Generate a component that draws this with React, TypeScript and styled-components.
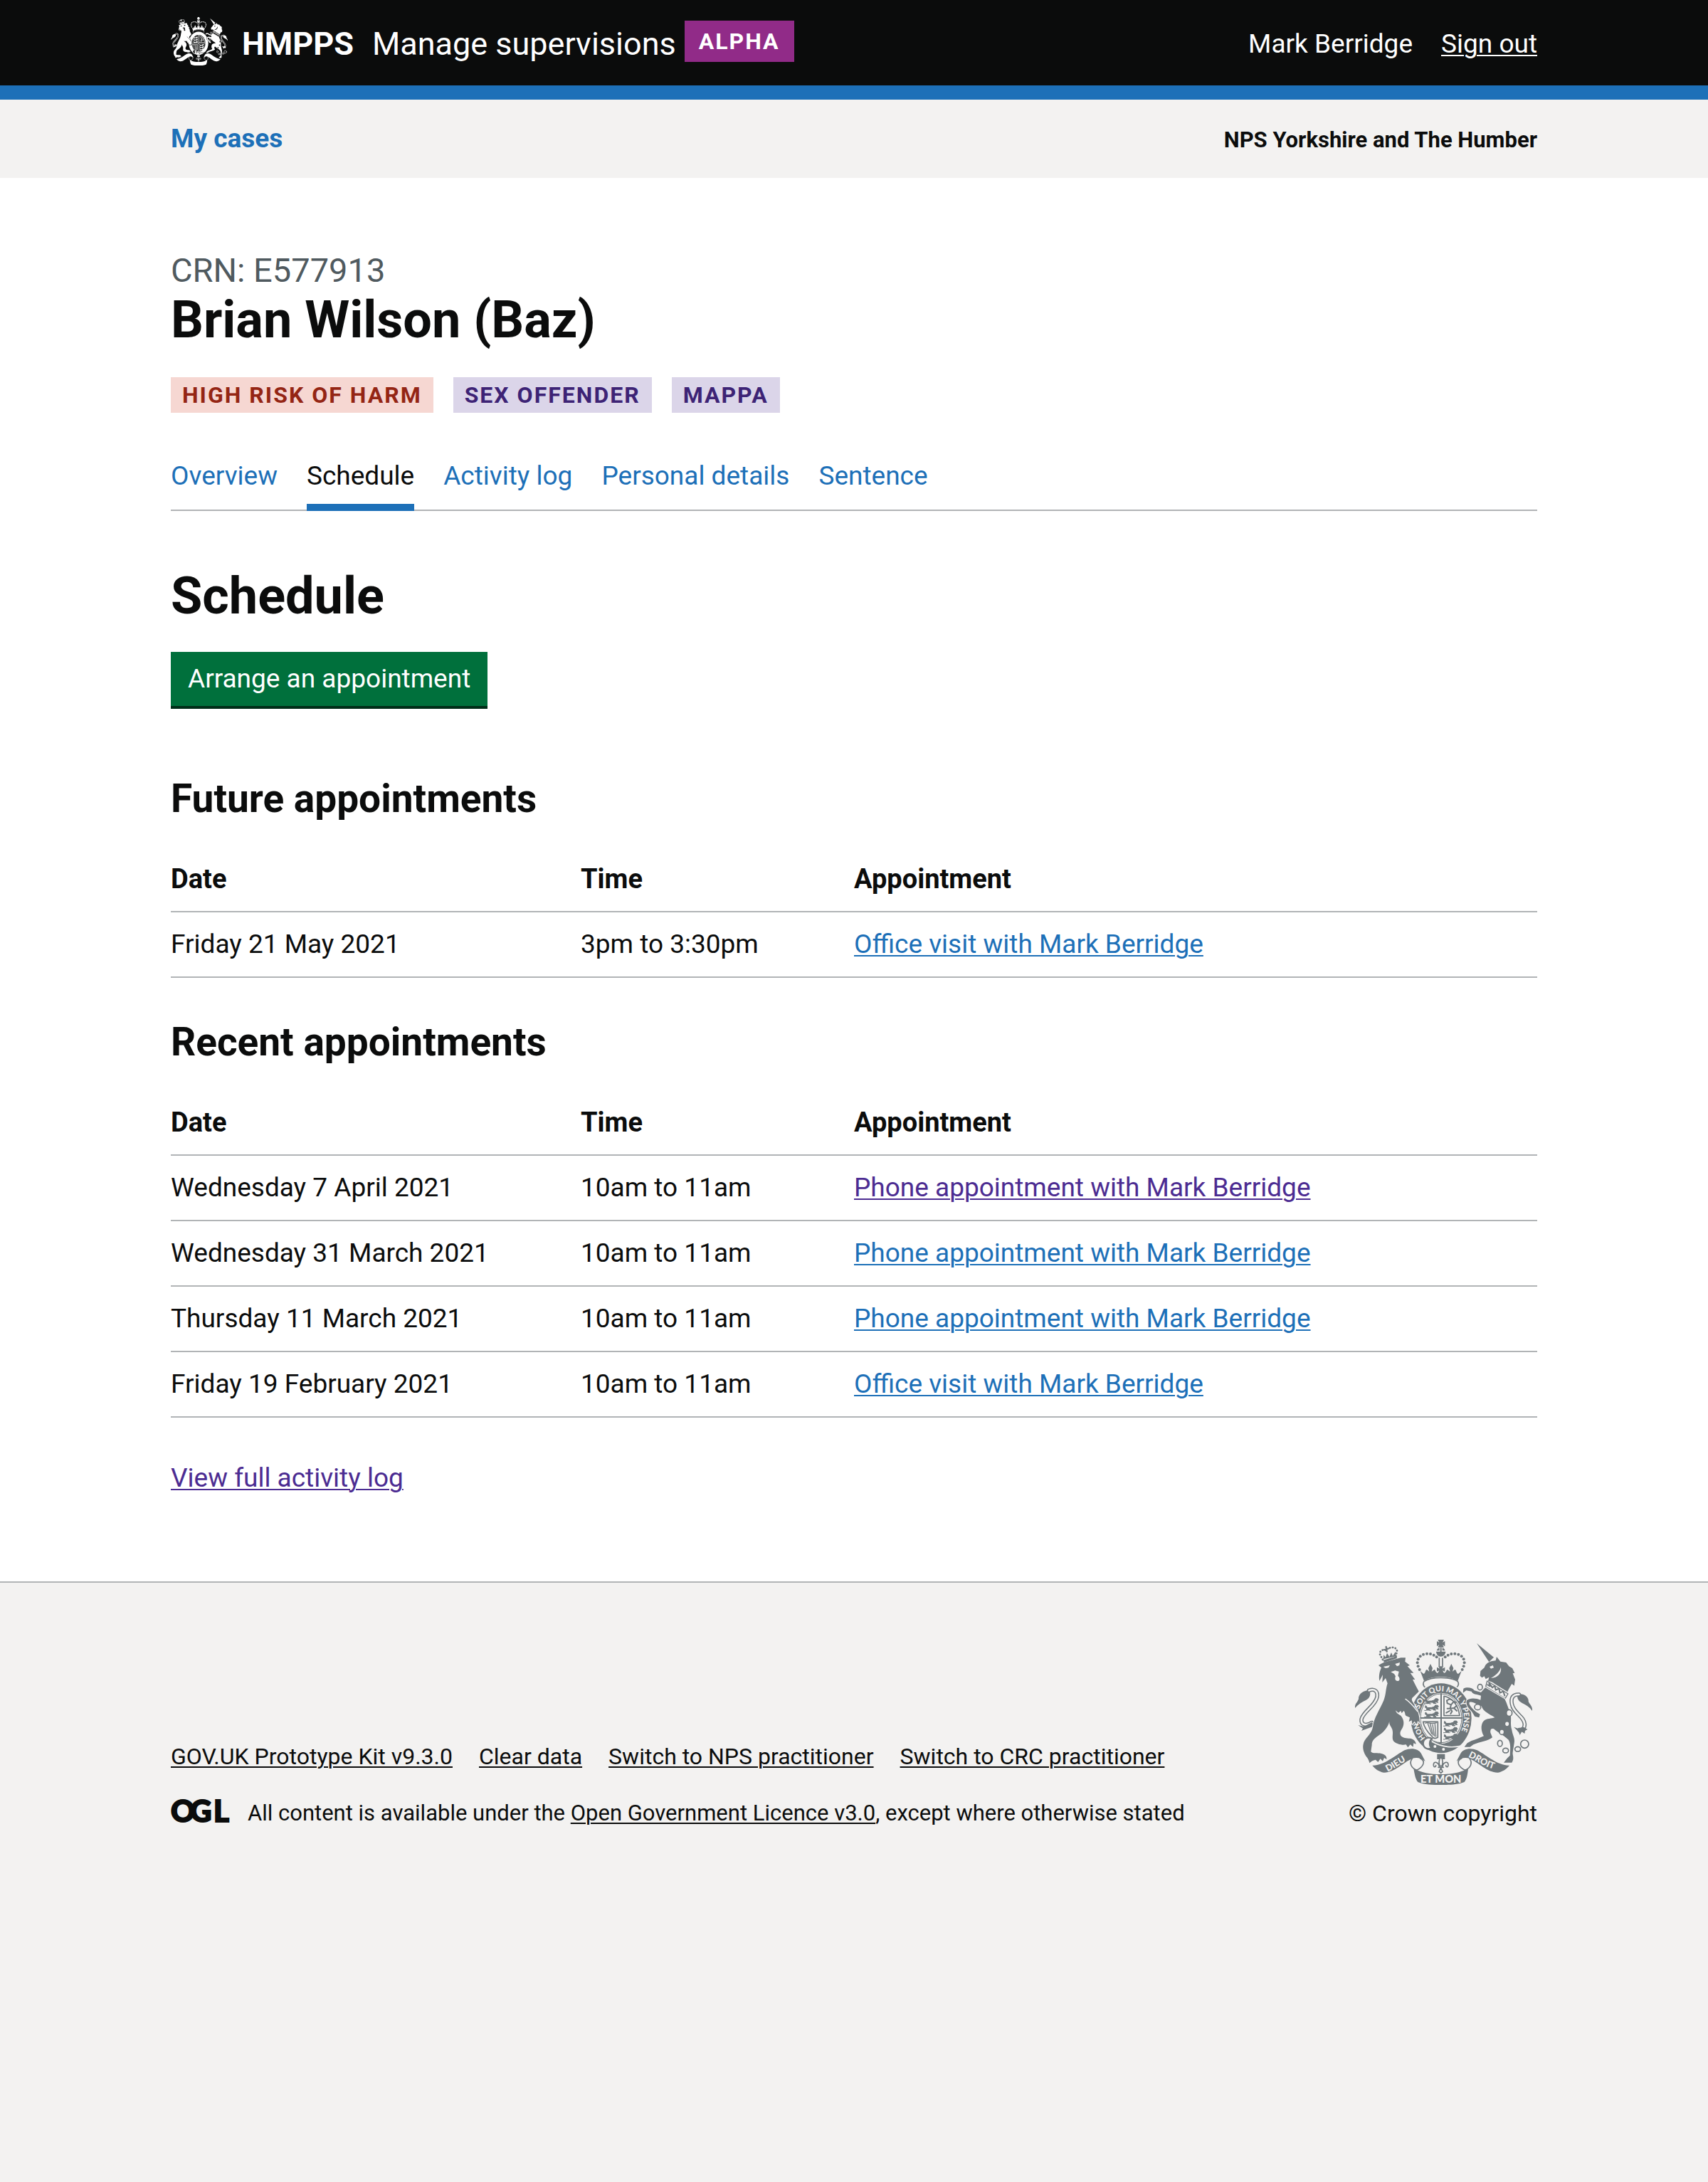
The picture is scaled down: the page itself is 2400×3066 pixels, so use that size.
import React from "react";
import styled, { createGlobalStyle } from "styled-components";

const color = {
  ink: "#0b0c0c",
  white: "#ffffff",
  blue: "#1d70b8",
  visited: "#4c2c92",
  panel: "#f3f2f1",
  border: "#b1b4b6",
  muted: "#505a5f",
  green: "#00703c",
  greenDark: "#002d18",
  crest: "#6f777b",
};

const GlobalStyle = createGlobalStyle`
  *, *::before, *::after { box-sizing: border-box; }
  body {
    margin: 0;
    background: ${color.panel};
    color: ${color.ink};
    font-family: Roboto, "Liberation Sans", sans-serif;
    font-size: 37px;
    line-height: 50px;
  }
`;

const Container = styled.div`
  max-width: 2000px;
  margin: 0 auto;
  padding: 0 40px;
`;

const Link = styled.a<{ $tone?: string }>`
  color: ${(p) => p.$tone ?? color.blue};
  text-decoration: underline;
  text-decoration-thickness: 2px;
  text-underline-offset: 3px;
`;

/* Header */

const Header = styled.header`
  background: ${color.ink};
  color: ${color.white};
  border-bottom: 20px solid ${color.blue};
`;

const HeaderBar = styled(Container)`
  display: flex;
  justify-content: space-between;
  align-items: center;
  padding-top: 24px;
  padding-bottom: 28px;
`;

const Brand = styled.div`
  display: flex;
  align-items: center;
  gap: 12px;
`;

const BrandLink = styled.a`
  display: flex;
  align-items: center;
  gap: 20px;
  color: inherit;
  text-decoration: none;
`;

const BrandName = styled.span`
  display: flex;
  gap: 26px;
  padding-top: 8px;
  font-size: 45px;
  line-height: 60px;
`;

const Phase = styled.strong`
  padding: 10px 20px;
  background: #912b88;
  font-size: 32px;
  line-height: 38px;
  letter-spacing: 2px;
`;

const UserNav = styled.nav`
  display: flex;
  gap: 40px;
  padding-top: 8px;
`;

const SubHeader = styled.div`
  background: ${color.panel};
`;

const SubHeaderBar = styled(Container)`
  display: flex;
  justify-content: space-between;
  align-items: baseline;
  padding-top: 30px;
  padding-bottom: 28px;
`;

const PrimaryLink = styled.a`
  color: ${color.blue};
  font-weight: 700;
  text-decoration: none;
`;

const Region = styled.strong`
  font-size: 31px;
`;

/* Page */

const Main = styled.main`
  background: ${color.white};
`;

const MainInner = styled(Container)`
  padding-top: 100px;
  padding-bottom: 120px;
`;

const Caption = styled.span`
  display: block;
  color: ${color.muted};
  font-size: 47px;
  line-height: 60px;
`;

const Title = styled.h1`
  margin: 0;
  font-size: 72px;
  line-height: 80px;
`;

const SectionTitle = styled.h2`
  margin: 80px 0 38px;
  font-size: 72px;
  line-height: 80px;
`;

const Tags = styled.div`
  display: flex;
  flex-wrap: wrap;
  gap: 28px;
  margin: 40px 0 64px;
`;

const Tag = styled.strong<{ $kind: "red" | "purple" }>`
  padding: 6px 16px;
  background: ${(p) => (p.$kind === "red" ? "#f6d7d2" : "#dbd5e9")};
  color: ${(p) => (p.$kind === "red" ? "#942514" : "#3d2375")};
  font-size: 32px;
  line-height: 38px;
  letter-spacing: 2px;
`;

const Tabs = styled.nav`
  display: flex;
  gap: 41px;
  box-shadow: inset 0 -2px 0 ${color.border};
`;

const Tab = styled.a<{ $active: boolean }>`
  padding-bottom: 14px;
  border-bottom: 10px solid ${(p) => (p.$active ? color.blue : "transparent")};
  color: ${(p) => (p.$active ? color.ink : color.blue)};
  text-decoration: none;
`;

const Button = styled.button`
  display: block;
  padding: 13px 24px;
  border: 0;
  background: ${color.green};
  box-shadow: 0 4px 0 ${color.greenDark};
  color: ${color.white};
  font: inherit;
`;

const Group = styled.section<{ $first?: boolean }>`
  margin-top: ${(p) => (p.$first ? 100 : 60)}px;
`;

const GroupTitle = styled.h3`
  margin: 0 0 38px;
  font-size: 55px;
  line-height: 60px;
`;

const Table = styled.table`
  width: 100%;
  border-collapse: separate;
  border-spacing: 0;
  table-layout: fixed;
`;

const Th = styled.th<{ $width: string }>`
  width: ${(p) => p.$width};
  padding: 20px 0;
  border-bottom: 2px solid ${color.border};
  font-size: 38px;
  text-align: left;
`;

const Td = styled.td`
  padding: 20px 0;
  border-bottom: 2px solid ${color.border};
`;

const LogLink = styled.p`
  margin: 60px 0 0;
`;

/* Footer */

const Footer = styled.footer`
  border-top: 2px solid ${color.border};
  font-size: 31px;
  line-height: 40px;
`;

const FooterBar = styled(Container)`
  display: flex;
  justify-content: space-between;
  align-items: flex-end;
  padding-top: 80px;
  padding-bottom: 80px;
`;

const FooterMeta = styled.div`
  display: grid;
  gap: 40px;
`;

const FooterLinks = styled.nav`
  display: flex;
  flex-wrap: wrap;
  gap: 37px;
  font-size: 32px;
`;

const Licence = styled.div`
  display: flex;
  align-items: flex-start;
  gap: 26px;
`;

const Copyright = styled.a`
  display: grid;
  justify-items: center;
  gap: 20px;
  color: inherit;
  font-size: 32px;
  text-decoration: none;
`;

const OglMark = styled.svg`
  flex: none;
  overflow: visible;
`;

/* Drawings */

type CrestProps = { width: number; height: number; fill: string; ground: string; lettering?: boolean };

const arch = [[347, 198], [341, 184], [338, 169], [341, 154], [350, 142], [363, 134], [378, 131], [393, 132], [407, 137], [419, 145]];

function Lions({ x, y }: { x: number; y: number }) {
  return (
    <g transform={`translate(${x} ${y})`}>
      {[0, 28, 56].map((dy) => (
        <path
          key={dy}
          transform={`translate(0 ${dy})`}
          d="M0 20H8L10 12L3 8L4 0L9 3L11 9L30 8L40 5L46 -2L56 -1L59 5L53 9L58 14H50L47 11L44 14L49 19H38L35 14H23L19 20H27M14 20L15 13"
          fill="currentColor"
          stroke="currentColor"
          strokeWidth="3"
        />
      ))}
    </g>
  );
}

function RibbonSide() {
  return (
    <>
      <path d="M148 602C196 604 240 562 284 538C312 526 344 532 354 552L371 584C352 570 334 566 316 573C278 590 238 634 196 632C176 628 160 617 148 602Z" fill="currentColor" />
      <path d="M316 573C302 592 312 614 336 622M350 572C376 584 362 608 336 622" fill="none" stroke="currentColor" strokeWidth="5" />
    </>
  );
}

function Crest({ width, height, fill, ground, lettering = false }: CrestProps) {
  return (
    <svg
      width={width}
      height={height}
      viewBox="72 72 750 612"
      preserveAspectRatio="none"
      color={fill}
      fill="none"
      strokeLinejoin="round"
      strokeLinecap="round"
      aria-hidden="true"
    >
      {/* crown */}
      <path d="M424 72H450L444 84L454 78V100L444 93L450 104H424L430 93L420 100V78L430 84Z" fill="currentColor" />
      <path d="M434 106H440V122H457C456 134 448 143 437 143C426 143 418 134 417 122H434Z" fill="currentColor" />
      <path d="M419 118C422 110 427 107 431 106V118ZM455 118C452 110 447 107 443 106V118Z" fill="currentColor" />
      <path d="M430 150V182M444 150V182" stroke="currentColor" strokeWidth="5" />
      {arch.map(([x, y]) => (
        <React.Fragment key={`${x}-${y}`}>
          <circle cx={x} cy={y} r="6" fill="currentColor" />
          <circle cx={874 - x} cy={y} r="6" fill="currentColor" />
        </React.Fragment>
      ))}
      <path d="M350 204L364 216C374 212 370 200 378 198L388 206L384 192L393 174L402 192L398 206L410 198C416 202 414 212 424 212L430 202L420 206V188L432 194L426 184H448L442 194L454 188V206L444 202L450 212C460 212 458 202 464 198L476 206L472 192L481 174L490 192L486 206L496 198C504 200 500 212 510 216L524 204L508 246C486 232 462 228 437 228C412 228 388 232 366 246Z" fill="currentColor" />
      <path d="M366 248C386 234 412 232 437 232C462 232 488 234 508 248C514 258 510 268 502 274H372C364 268 360 258 366 248Z" fill={ground} stroke="currentColor" strokeWidth="5" />

      {/* garter and shield */}
      <ellipse cx="438" cy="403" rx="132" ry="152" fill={ground} />
      <ellipse cx="438" cy="403" rx="128" ry="147" fill="currentColor" />
      <ellipse cx="438" cy="403" rx="91" ry="107" fill={ground} />
      <ellipse cx="438" cy="403" rx="87" ry="103" stroke="currentColor" strokeWidth="3" />
      <path d="M438 300V506M351 402H525" stroke="currentColor" strokeWidth="6" />
      <Lions x={368} y={322} />
      <Lions x={448} y={416} />
      <path d="M450 310C484 316 510 346 516 392H450Z" stroke="currentColor" strokeWidth="5" />
      <path d="M460 380L474 372M480 346L492 332L500 338M480 346L464 340L462 328L474 322L484 326M480 346L476 362L464 362M476 362L484 374L478 384M476 362L492 360L504 372M492 360L504 350" stroke="currentColor" strokeWidth="6" />
      <path d="M362 418H424V484C414 490 404 488 398 478C382 462 366 444 362 418Z" stroke="currentColor" strokeWidth="5" />
      <path d="M372 424C382 416 396 432 418 422M382 426L398 468M392 428L404 474M402 430L410 478M412 428L416 480" stroke="currentColor" strokeWidth="4" />
      <path d="M368 492L420 504C452 514 480 516 514 508L506 524C470 552 420 552 366 528Z" fill="currentColor" />
      <path d="M400 502C436 522 476 530 520 520" stroke={ground} strokeWidth="5" />
      <path d="M400 490C382 478 362 490 362 510C364 530 384 538 398 528C388 522 386 498 400 490Z" fill={ground} stroke="currentColor" strokeWidth="7" />
      <circle cx="412" cy="522" r="6" fill={ground} />
      <circle cx="448" cy="534" r="6" fill={ground} />

      {/* lion */}
      <path d="M75 360C74 340 84 340 90 322C88 300 112 286 134 284C144 300 138 318 122 326C104 334 88 344 75 360Z" fill="currentColor" />
      <path d="M134 286C160 276 172 292 168 314C160 352 108 376 102 408C100 430 120 438 146 422" stroke="currentColor" strokeWidth="17" />
      <path d="M134 286C160 276 172 292 168 314C160 352 108 376 102 408C100 430 120 438 146 422" stroke={ground} strokeWidth="8" />
      <path d="M88 432L112 438L146 420L158 436L128 446L102 456L108 446Z" fill="currentColor" />
      <path
        d="M174 180L184 174L196 168L268 148L288 148L286 164L306 180L296 184L322 212L308 212L328 240L318 240L332 268L344 290L322 312C314 318 312 324 318 334C334 360 346 380 348 424L340 414L334 430L326 416L316 428L314 412L302 418L306 400L292 394C284 390 288 378 280 372L272 382L268 372L258 380L246 370C248 380 256 386 268 392C280 406 284 424 276 442C268 456 262 464 268 476C276 486 292 488 306 488C322 490 332 500 332 512L322 508L320 524L308 514L298 526L290 514C272 518 248 510 238 500C228 486 238 470 232 450C226 434 218 430 220 416C214 440 200 456 180 472C156 488 146 498 146 516L142 544C150 554 170 548 186 552C202 556 210 564 208 576L198 570L192 584L182 574L172 588L162 578C150 580 142 586 136 592C134 580 128 570 122 564C112 548 106 530 110 512C114 486 144 474 150 440C154 402 180 366 196 328C206 302 204 280 212 256L204 234L190 252L192 220L178 246C174 222 180 204 186 190Z"
        fill="currentColor"
        stroke={ground}
        strokeWidth="7"
        paintOrder="stroke"
      />
      <path d="M194 186L222 180L216 190L204 192ZM244 174L264 168L262 180L252 184Z" fill={ground} />
      <path d="M226 208L244 202L260 206L256 224C266 234 264 246 254 246C244 246 242 236 246 226L240 216Z" fill={ground} />
      <path d="M288 322C308 336 326 358 338 374" stroke={ground} strokeWidth="4" />
      {/* lion's crown */}
      <path d="M194 158L250 142L252 150L198 168Z" fill="currentColor" />
      <path d="M192 156L180 134C178 120 190 112 204 116M248 142L252 118C248 104 232 100 214 110" stroke="currentColor" strokeWidth="8" strokeDasharray="1 11" />
      <path d="M194 154L196 136L204 146L210 128L220 144L228 126L234 140L246 122L248 142Z" fill="currentColor" />
      <path d="M206 102L209 122M198 114L216 109" stroke="currentColor" strokeWidth="7" />

      {/* unicorn */}
      <path d="M588 87L660 146L640 166Z" fill="currentColor" />
      <path d="M822 372C824 352 812 346 806 332C808 314 790 300 764 300C754 314 762 330 778 338C796 346 812 356 822 372Z" fill="currentColor" />
      <path d="M766 303C738 302 732 320 736 342C742 382 788 394 790 428C790 446 782 452 768 452" stroke="currentColor" strokeWidth="17" />
      <path d="M766 303C738 302 732 320 736 342C742 382 788 394 790 428C790 446 782 452 768 452" stroke={ground} strokeWidth="8" />
      <path d="M744 440L762 446L786 440L802 450L792 456L790 468L778 460L770 474L764 460Z" fill="currentColor" />
      <path d="M602 224L604 204L620 190C626 172 640 162 668 160L672 144L688 164L712 168L724 184L738 192L748 212L740 214L750 240L746 266L736 258C728 272 722 280 718 292L664 258C654 250 646 248 636 246L640 230L626 238L620 226L610 232Z" fill="currentColor" />
      <path d="M642 186L656 180L660 190L648 194Z" fill={ground} />
      <path d="M690 188C694 214 676 232 648 234C668 222 684 208 690 188Z" fill={ground} />
      <path d="M632 246L720 300L708 320L626 270Z" fill={ground} stroke="currentColor" strokeWidth="4" />
      <path d="M634 262L644 268L640 254L654 274L664 266L668 284L682 278L686 296L700 290L706 308" stroke="currentColor" strokeWidth="6" />
      <path
        d="M624 274L706 322C716 342 722 364 730 384C736 408 728 426 736 452C740 478 750 486 746 508L740 546C738 560 748 572 736 590H702L716 572L728 560C730 534 732 510 722 494C700 474 676 462 660 448C650 444 644 450 646 464L654 484C636 500 600 502 574 514L560 524H536L548 508L566 498C586 494 602 484 618 478C606 456 604 432 616 416C630 402 652 406 664 400C640 384 616 376 608 352L592 346C576 336 560 330 556 338C556 350 576 368 588 378L602 386L598 400L580 396L568 376C554 362 540 346 546 328C560 316 584 318 604 326L606 308C590 300 574 306 566 290L544 286L530 296L532 278C548 270 570 274 578 286L606 294Z"
        fill="currentColor"
        stroke={ground}
        strokeWidth="7"
        paintOrder="stroke"
      />
      <g stroke="currentColor" strokeWidth="5" fill={ground}>
        <ellipse cx="602" cy="272" rx="10" ry="12" />
        <ellipse cx="592" cy="356" rx="13" ry="12" />
        <ellipse cx="725" cy="381" rx="12" ry="14" />
        <ellipse cx="716" cy="427" rx="10" ry="11" />
        <ellipse cx="694" cy="461" rx="10" ry="11" />
        <ellipse cx="686" cy="509" rx="10" ry="13" />
        <ellipse cx="710" cy="539" rx="12" ry="10" />
        <ellipse cx="761" cy="533" rx="12" ry="10" />
        <circle cx="790" cy="512" r="17" />
      </g>

      {/* ribbon */}
      <RibbonSide />
      <g transform="translate(874 0) scale(-1 1)">
        <RibbonSide />
      </g>
      <path d="M322 614C352 632 392 639 437 639C482 639 522 632 552 614C550 640 546 660 536 672C508 684 470 684 437 684C404 684 368 684 340 672C330 660 326 640 322 614Z" fill="currentColor" />
      <path d="M421 554H454V576H421Z" fill="currentColor" />
      <path d="M437 566C424 580 430 594 432 604H442C444 594 450 580 437 566ZM430 606C426 586 404 582 406 602C408 612 416 608 416 602M444 606C448 586 470 582 468 602C466 612 458 608 458 602M426 610H448M437 612L430 628L437 634L444 628Z" fill={ground} stroke="currentColor" strokeWidth="5" />

      {lettering && (
        <g fill={ground} fontFamily="Lato, sans-serif" fontWeight="900">
          <defs>
            <path id="garter-motto" d="M346 365A97 114 0 1 1 495 495" />
            <path id="garter-start" d="M372 486A97 114 0 0 1 342 418" />
            <path id="ribbon-left" d="M212 628C250 612 276 584 318 572" />
            <path id="ribbon-right" d="M552 566C590 580 620 612 680 622" />
          </defs>
          <text fontSize="32"><textPath href="#garter-motto">SOIT QUI MAL Y PENSE</textPath></text>
          <text fontSize="30"><textPath href="#garter-start">HON</textPath></text>
          <text fontSize="38"><textPath href="#ribbon-left">DIEU</textPath></text>
          <text fontSize="38"><textPath href="#ribbon-right">DROIT</textPath></text>
          <text x="437" y="675" fontSize="44" textAnchor="middle">ET MON</text>
        </g>
      )}
    </svg>
  );
}

function OglLogo() {
  return (
    <OglMark width="82" height="34" viewBox="0 0 82 34" role="img" aria-label="Open Government Licence">
      <text x="0 27 60" y="32" fontFamily="Lato, sans-serif" fontWeight="900" fontSize="42" fill={color.ink} stroke={color.ink} strokeWidth="2">
        OGL
      </text>
    </OglMark>
  );
}

/* Data */

type Appointment = { date: string; time: string; title: string; seen?: boolean };

const future: Appointment[] = [
  { date: "Friday 21 May 2021", time: "3pm to 3:30pm", title: "Office visit with Mark Berridge" },
];

const recent: Appointment[] = [
  { date: "Wednesday 7 April 2021", time: "10am to 11am", title: "Phone appointment with Mark Berridge", seen: true },
  { date: "Wednesday 31 March 2021", time: "10am to 11am", title: "Phone appointment with Mark Berridge" },
  { date: "Thursday 11 March 2021", time: "10am to 11am", title: "Phone appointment with Mark Berridge" },
  { date: "Friday 19 February 2021", time: "10am to 11am", title: "Office visit with Mark Berridge" },
];

const tabs = ["Overview", "Schedule", "Activity log", "Personal details", "Sentence"];
const footerLinks = ["GOV.UK Prototype Kit v9.3.0", "Clear data", "Switch to NPS practitioner", "Switch to CRC practitioner"];

function Appointments({ id, title, rows, first }: { id: string; title: string; rows: Appointment[]; first?: boolean }) {
  return (
    <Group $first={first} aria-labelledby={id}>
      <GroupTitle id={id}>{title}</GroupTitle>
      <Table aria-labelledby={id}>
        <thead>
          <tr>
            <Th scope="col" $width="30%">Date</Th>
            <Th scope="col" $width="20%">Time</Th>
            <Th scope="col" $width="50%">Appointment</Th>
          </tr>
        </thead>
        <tbody>
          {rows.map((row) => (
            <tr key={row.date}>
              <Td>{row.date}</Td>
              <Td>{row.time}</Td>
              <Td>
                <Link href="#" $tone={row.seen ? color.visited : color.blue}>{row.title}</Link>
              </Td>
            </tr>
          ))}
        </tbody>
      </Table>
    </Group>
  );
}

export default function App() {
  return (
    <>
      <GlobalStyle />
      <Header>
        <HeaderBar>
          <Brand>
            <BrandLink href="#">
              <Crest width={80} height={68} fill={color.white} ground={color.ink} />
              <BrandName>
                <strong>HMPPS</strong>
                <span>Manage supervisions</span>
              </BrandName>
            </BrandLink>
            <Phase>ALPHA</Phase>
          </Brand>
          <UserNav aria-label="Account">
            <span>Mark Berridge</span>
            <Link href="#" $tone={color.white}>Sign out</Link>
          </UserNav>
        </HeaderBar>
      </Header>
      <SubHeader>
        <SubHeaderBar>
          <PrimaryLink href="#">My cases</PrimaryLink>
          <Region>NPS Yorkshire and The Humber</Region>
        </SubHeaderBar>
      </SubHeader>
      <Main>
        <MainInner>
          <Caption>CRN: E577913</Caption>
          <Title>Brian Wilson (Baz)</Title>
          <Tags>
            <Tag $kind="red">HIGH RISK OF HARM</Tag>
            <Tag $kind="purple">SEX OFFENDER</Tag>
            <Tag $kind="purple">MAPPA</Tag>
          </Tags>
          <Tabs aria-label="Case">
            {tabs.map((tab) => (
              <Tab key={tab} href="#" $active={tab === "Schedule"} aria-current={tab === "Schedule" ? "page" : undefined}>
                {tab}
              </Tab>
            ))}
          </Tabs>
          <SectionTitle>Schedule</SectionTitle>
          <Button type="button">Arrange an appointment</Button>
          <Appointments id="future" title="Future appointments" rows={future} first />
          <Appointments id="recent" title="Recent appointments" rows={recent} />
          <LogLink>
            <Link href="#" $tone={color.visited}>View full activity log</Link>
          </LogLink>
        </MainInner>
      </Main>
      <Footer>
        <FooterBar>
          <FooterMeta>
            <FooterLinks aria-label="Support">
              {footerLinks.map((label) => (
                <Link key={label} href="#" $tone={color.ink}>{label}</Link>
              ))}
            </FooterLinks>
            <Licence>
              <OglLogo />
              <span>
                All content is available under the <Link href="#" $tone={color.ink}>Open Government Licence v3.0</Link>, except where otherwise stated
              </span>
            </Licence>
          </FooterMeta>
          <Copyright href="#">
            <Crest width={250} height={204} fill={color.crest} ground={color.panel} lettering />
            <span>© Crown copyright</span>
          </Copyright>
        </FooterBar>
      </Footer>
    </>
  );
}
